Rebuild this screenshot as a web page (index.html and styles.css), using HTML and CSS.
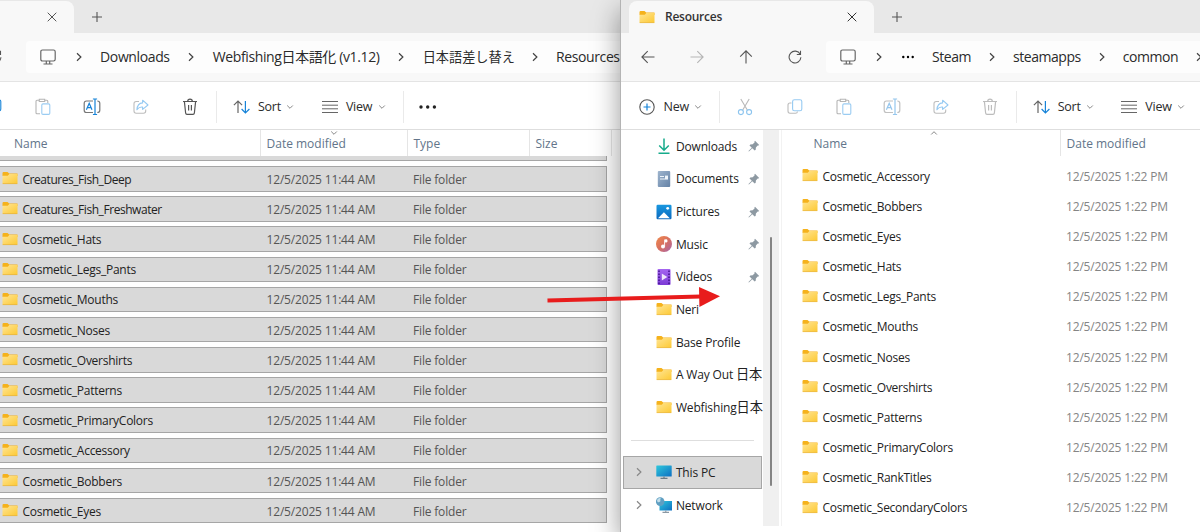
FILE: index.html
```
<!DOCTYPE html>
<html lang="en">
<head>
	<meta charset="utf-8">
	<title>Resources</title>
	<link rel="stylesheet" href="styles.css">
</head>
<body>
	<!-- shared icons -->
	<svg class="defs" width="0" height="0">
		<defs>
			<linearGradient id="gFolder" x1="0" y1="0" x2="1" y2="1"><stop offset="0" stop-color="#ffe594"/><stop offset="1" stop-color="#fdc933"/></linearGradient>
			<linearGradient id="gDoc" x1="0" y1="0" x2="1" y2="1"><stop offset="0" stop-color="#9fb5ce"/><stop offset="1" stop-color="#6482a6"/></linearGradient>
			<linearGradient id="gPic" x1="0" y1="0" x2="0" y2="1"><stop offset="0" stop-color="#1a98e0"/><stop offset="1" stop-color="#0b68bd"/></linearGradient>
			<linearGradient id="gMusic" x1="0" y1="0" x2="1" y2="1"><stop offset="0" stop-color="#f08a4c"/><stop offset=".5" stop-color="#d8705f"/><stop offset="1" stop-color="#a565b0"/></linearGradient>
			<linearGradient id="gVid" x1="0" y1="0" x2="0" y2="1"><stop offset="0" stop-color="#a566f0"/><stop offset="1" stop-color="#7c3bd6"/></linearGradient>
			<linearGradient id="gPc" x1="0" y1="0" x2="1" y2="1"><stop offset="0" stop-color="#2fc8dc"/><stop offset="1" stop-color="#0d6fc2"/></linearGradient>
		</defs>
		<symbol id="folder" viewBox="0 0 16 14"><path d="M.5 2.2Q.5 1 1.600 1H5.500L7.200 2.500H15.500V5H.5z" fill="#f5b21c"/><path d="M.5 4.800H5.800L7.300 3H15.500V12.300Q15.500 12.800 15 12.800H1Q.5 12.800.5 12.300z" fill="url(#gFolder)"/><path d="M.7 12.600H15.300" stroke="#e9b02d" stroke-width=".7"/></symbol>
		<symbol id="chev" viewBox="0 0 8 12"><path d="M2 2.200L5.900 6 2 9.800" fill="none" stroke="currentColor" stroke-width="1.200"/></symbol>
		<symbol id="down" viewBox="0 0 8 6"><path d="M1.200 1.500L4 4.300 6.800 1.500" fill="none" stroke="currentColor"/></symbol>
		<symbol id="close" viewBox="0 0 10 10"><path d="M.7.700L9.300 9.300M9.300.700L.7 9.300" stroke="currentColor"/></symbol>
		<symbol id="plus" viewBox="0 0 10 10"><path d="M5 0V10M0 5H10" stroke="currentColor" stroke-width="1.100"/></symbol>
		<symbol id="monitor" viewBox="0 0 16 16"><path d="M2.500 1H13.500Q15.200 1 15.200 2.700V10.300Q15.200 12 13.500 12H2.500Q.8 12 .8 10.300V2.700Q.8 1 2.500 1zM6.300 12V14.800M9.700 12V14.800M3.500 15H12.500" fill="none" stroke="#666" stroke-width="1.200"/></symbol>
		<symbol id="refresh" viewBox="0 0 14 14"><path d="M12.200 4.200A5.900 5.900 0 1 0 12.900 7.300M12.500.800V4.500H8.800" fill="none" stroke="#555" stroke-width="1.100"/></symbol>
		<symbol id="cut" viewBox="0 0 16 18"><g fill="none" stroke-width="1.100"><path d="M3.800 1L10.300 12M12.200 1L5.700 12" stroke="#b9b9b9"/><circle cx="3.900" cy="14.100" r="2.500" stroke="#8cc4ee"/><circle cx="12.100" cy="14.100" r="2.500" stroke="#8cc4ee"/></g></symbol>
		<symbol id="copy" viewBox="0 0 16 18"><g fill="none" stroke-width="1.100"><path d="M4.500 5H3Q1 5 1 7V13Q1 15.200 3 15.200H8.500Q10.300 15.200 10.500 13.500" stroke="#bcbcbc"/><rect x="5.600" y="1.800" width="9.200" height="11" rx="1.800" stroke="currentColor"/></g></symbol>
		<symbol id="paste" viewBox="0 0 16 18"><g fill="none" stroke-width="1.100"><path d="M5 15.800H2Q1 15.800 1 14.800V3.300Q1 2.300 2 2.300H4M10 2.300H11.800Q12.800 2.300 12.800 3.300V5M4.300 1.300H9.700V3.500H4.300z" stroke="#b5b5b5"/><rect x="6.800" y="5.900" width="8" height="10.500" rx="1.200" stroke="#9accf2"/></g></symbol>
		<symbol id="rename" viewBox="0 0 18 18"><g fill="none" stroke="currentColor" stroke-width="1.200"><path class="frame" d="M10 3H3.500Q1.200 3 1.200 5.300V12.200Q1.200 14.500 3.500 14.500H10M14.300 3Q16.800 3 16.800 5.300V12.200Q16.800 14.500 14.300 14.500"/><path d="M3.400 11.800L6.200 5.200 9 11.800M4.300 9.700H8.100"/><path d="M12 1.200V16.300M9.900 1H14.100M9.900 16.500H14.100"/></g></symbol>
		<symbol id="share" viewBox="0 0 16 18"><g fill="none" stroke-width="1.100"><path d="M6 3.500H3.200Q1 3.500 1 5.700V13Q1 15.200 3.200 15.200H10.500Q12.700 15.200 12.700 13V11.500" stroke="#bdbdbd"/><path d="M9.600 2.200L15 7 9.600 11.400V9Q6 8.700 3.900 11.700 4.400 5.300 9.600 4.900z" stroke="#96caf2" stroke-linejoin="round"/></g></symbol>
		<symbol id="trash" viewBox="0 0 16 18"><path d="M1 3.500H15M5.700 3.300Q5.700 1.200 8 1.200T10.300 3.300M2.400 3.600L3.600 14.800Q3.800 16.300 5 16.300H11Q12.200 16.300 12.400 14.800L13.600 3.600M6.600 7V12.500M9.400 7V12.500" fill="none" stroke="currentColor" stroke-width="1.200"/></symbol>
		<symbol id="sort" viewBox="0 0 18 16"><g fill="none" stroke-width="1.200"><path d="M5 14V2M.9 6.100L5 2 9.100 6.100" stroke="#666"/><path d="M12.400 2V14M8.600 10L12.400 14 16.400 10" stroke="#1683d8"/></g></symbol>
		<symbol id="view" viewBox="0 0 16 12"><path d="M0 .5H16M0 4.200H16M0 7.800H16M0 11.500H16" stroke="#666" stroke-width="1"/></symbol>
		<symbol id="pin" viewBox="0 0 12 12"><path d="M7 .8L11.200 4.900 10.400 5.600 9.700 5.400 7.900 7.400 7.700 9.700 6.700 10.600 4.300 8.200 1.200 11.300.500 11.500.700 10.800 3.800 7.700 1.500 5.400 2.300 4.400 4.700 4.200 6.700 2.300 6.400 1.500z" fill="#8d99a2"/></symbol>
	</svg>

	<!-- source window -->
	<div class="window source">
		<div class="tabs">
			<div class="tab"><svg class="x"><use href="#close"/></svg></div>
			<svg class="add"><use href="#plus"/></svg>
		</div>
		<div class="nav">
			<svg class="icon14 cut-off"><use href="#refresh"/></svg>
			<div class="address">
				<svg class="pc"><use href="#monitor"/></svg>
				<svg class="sep"><use href="#chev"/></svg>
				<span class="crumb">Downloads</span>
				<svg class="sep"><use href="#chev"/></svg>
				<span class="crumb">Webfishing日本語化 (v1.12)</span>
				<svg class="sep"><use href="#chev"/></svg>
				<span class="crumb jp">日本語差し替え</span>
				<svg class="sep"><use href="#chev"/></svg>
				<span class="crumb">Resources</span>
			</div>
		</div>
		<div class="toolbar">
			<div class="tool"><svg class="strong"><use href="#copy"/></svg></div>
			<div class="tool"><svg><use href="#paste"/></svg></div>
			<div class="tool"><svg class="w18 accent"><use href="#rename"/></svg></div>
			<div class="tool"><svg><use href="#share"/></svg></div>
			<div class="tool dark"><svg><use href="#trash"/></svg></div>
			<div class="line"></div>
			<div class="menu sort"><svg class="sorticon"><use href="#sort"/></svg><span>Sort</span><svg class="dd"><use href="#down"/></svg></div>
			<div class="menu view"><svg class="viewicon"><use href="#view"/></svg><span>View</span><svg class="dd"><use href="#down"/></svg></div>
			<div class="line"></div>
			<svg class="more" viewBox="0 0 18 4"><circle cx="2" cy="2" r="1.700"/><circle cx="8.700" cy="2" r="1.700"/><circle cx="15.400" cy="2" r="1.700"/></svg>
		</div>
		<div class="head">
			<div>Name</div>
			<div>Date modified<svg class="mark"><use href="#down"/></svg></div>
			<div>Type</div>
			<div>Size</div>
		</div>
		<div class="rows">
			<div class="stub"></div>
			<div class="row"><svg><use href="#folder"/></svg><span class="tight">Creatures_Fish_Deep</span><span>12/5/2025 11:44 AM</span><span>File folder</span></div>
			<div class="row"><svg><use href="#folder"/></svg><span class="tight">Creatures_Fish_Freshwater</span><span>12/5/2025 11:44 AM</span><span>File folder</span></div>
			<div class="row"><svg><use href="#folder"/></svg><span>Cosmetic_Hats</span><span>12/5/2025 11:44 AM</span><span>File folder</span></div>
			<div class="row"><svg><use href="#folder"/></svg><span>Cosmetic_Legs_Pants</span><span>12/5/2025 11:44 AM</span><span>File folder</span></div>
			<div class="row"><svg><use href="#folder"/></svg><span>Cosmetic_Mouths</span><span>12/5/2025 11:44 AM</span><span>File folder</span></div>
			<div class="row"><svg><use href="#folder"/></svg><span>Cosmetic_Noses</span><span>12/5/2025 11:44 AM</span><span>File folder</span></div>
			<div class="row"><svg><use href="#folder"/></svg><span>Cosmetic_Overshirts</span><span>12/5/2025 11:44 AM</span><span>File folder</span></div>
			<div class="row"><svg><use href="#folder"/></svg><span>Cosmetic_Patterns</span><span>12/5/2025 11:44 AM</span><span>File folder</span></div>
			<div class="row"><svg><use href="#folder"/></svg><span>Cosmetic_PrimaryColors</span><span>12/5/2025 11:44 AM</span><span>File folder</span></div>
			<div class="row"><svg><use href="#folder"/></svg><span>Cosmetic_Accessory</span><span>12/5/2025 11:44 AM</span><span>File folder</span></div>
			<div class="row"><svg><use href="#folder"/></svg><span>Cosmetic_Bobbers</span><span>12/5/2025 11:44 AM</span><span>File folder</span></div>
			<div class="row"><svg><use href="#folder"/></svg><span>Cosmetic_Eyes</span><span>12/5/2025 11:44 AM</span><span>File folder</span></div>
		</div>
	</div>

	<!-- target window -->
	<div class="window target">
		<div class="tabs">
			<div class="tab"><svg class="tabfolder"><use href="#folder"/></svg><span>Resources</span><svg class="x"><use href="#close"/></svg></div>
			<svg class="add"><use href="#plus"/></svg>
		</div>
		<div class="nav">
			<svg class="icon14" viewBox="0 0 14 14"><path d="M13.500 7H1M6.700 1.200L.9 7 6.700 12.800" fill="none" stroke="#555" stroke-width="1.100"/></svg>
			<svg class="icon14" viewBox="0 0 14 14"><path d="M.5 7H13M7.300 1.200L13.100 7 7.300 12.800" fill="none" stroke="#b5b5b5" stroke-width="1.100"/></svg>
			<svg class="icon14" viewBox="0 0 14 14"><path d="M7 13.500V1M1.200 6.700L7 .9 12.800 6.700" fill="none" stroke="#555" stroke-width="1.100"/></svg>
			<svg class="icon14"><use href="#refresh"/></svg>
			<div class="address">
				<svg class="pc"><use href="#monitor"/></svg>
				<svg class="sep"><use href="#chev"/></svg>
				<svg class="dots" viewBox="0 0 12 4"><circle cx="1.300" cy="2" r="1.200"/><circle cx="6" cy="2" r="1.200"/><circle cx="10.700" cy="2" r="1.200"/></svg>
				<span class="crumb">Steam</span>
				<svg class="sep"><use href="#chev"/></svg>
				<span class="crumb">steamapps</span>
				<svg class="sep"><use href="#chev"/></svg>
				<span class="crumb">common</span>
				<svg class="sep"><use href="#chev"/></svg>
			</div>
		</div>
		<div class="toolbar faded">
			<div class="menu new"><svg viewBox="0 0 16 16"><circle cx="8" cy="8" r="7.200" fill="none" stroke="#555" stroke-width="1.100"/><path d="M8 4.500V11.500M4.500 8H11.500" stroke="#1683d8" stroke-width="1.200"/></svg><span>New</span><svg class="dd"><use href="#down"/></svg></div>
			<div class="line"></div>
			<div class="tool"><svg><use href="#cut"/></svg></div>
			<div class="tool"><svg class="soft"><use href="#copy"/></svg></div>
			<div class="tool"><svg><use href="#paste"/></svg></div>
			<div class="tool"><svg class="w18 accent"><use href="#rename"/></svg></div>
			<div class="tool"><svg><use href="#share"/></svg></div>
			<div class="tool"><svg><use href="#trash"/></svg></div>
			<div class="line"></div>
			<div class="menu sort"><svg class="sorticon"><use href="#sort"/></svg><span>Sort</span><svg class="dd"><use href="#down"/></svg></div>
			<div class="menu view"><svg class="viewicon"><use href="#view"/></svg><span>View</span><svg class="dd"><use href="#down"/></svg></div>
		</div>
		<div class="body">
			<div class="side">
				<div class="item"><svg viewBox="0 0 16 16"><path d="M8 .5V12M3.200 7.500L8 12.200 12.800 7.500M2.500 15.200H13.500" fill="none" stroke="#16ab8b" stroke-width="1.500"/></svg><span>Downloads</span><svg class="pin"><use href="#pin"/></svg></div>
				<div class="item"><svg viewBox="0 0 16 16"><rect x="1.800" width="12.400" height="16" rx="1" fill="url(#gDoc)"/><path d="M4 5.500H8M4 8H12" stroke="#eef4fa" stroke-width="1.100"/><rect x="9" y="4.600" width="3" height="3.500" fill="#eef4fa"/></svg><span>Documents</span><svg class="pin"><use href="#pin"/></svg></div>
				<div class="item"><svg viewBox="0 0 16 16"><rect x=".5" y=".7" width="15" height="14.600" rx="1.200" fill="url(#gPic)"/><path d="M2 14.200L7.900 8.200 13.800 14.200z" fill="#fff"/><circle cx="11.700" cy="4.300" r="1.400" fill="#fff"/></svg><span>Pictures</span><svg class="pin"><use href="#pin"/></svg></div>
				<div class="item"><svg viewBox="0 0 16 16"><circle cx="8" cy="8" r="8" fill="url(#gMusic)"/><path d="M8.600 10.500V3.800H11V6H9.200" fill="#fff" stroke="#fff" stroke-width=".8"/><circle cx="7" cy="10.600" r="2" fill="#fff"/></svg><span>Music</span><svg class="pin"><use href="#pin"/></svg></div>
				<div class="item"><svg viewBox="0 0 16 16"><rect x="1.500" width="13" height="16" rx="1" fill="url(#gVid)"/><path d="M3 1.500V15M13 1.500V15" stroke="#43138c" stroke-width="1.500" stroke-dasharray="1.600 1.400"/><path d="M5.800 4.500V11.500L11.300 8z" fill="#f0e6fb"/></svg><span>Videos</span><svg class="pin"><use href="#pin"/></svg></div>
				<div class="item"><svg class="f"><use href="#folder"/></svg><span>Neri</span></div>
				<div class="item"><svg class="f"><use href="#folder"/></svg><span>Base Profile</span></div>
				<div class="item"><svg class="f"><use href="#folder"/></svg><span>A Way Out <b>日本</b></span></div>
				<div class="item"><svg class="f"><use href="#folder"/></svg><span>Webfishing<b>日本</b></span></div>
				<div class="rule"></div>
				<div class="item tree selected"><svg class="sep"><use href="#chev"/></svg><svg viewBox="0 0 16 16"><rect x=".3" y="1.500" width="15.400" height="11" rx=".6" fill="url(#gPc)"/><path d="M8 12.500V14M4.500 14.300H11.500" stroke="#6c7a85" stroke-width="1.200"/></svg><span>This PC</span></div>
				<div class="item tree"><svg class="sep"><use href="#chev"/></svg><svg viewBox="0 0 16 16"><path d="M3.500 4H16V13.500H3.500z" fill="url(#gPc)"/><path d="M9.800 13.500V15M6.500 15.400H13" stroke="#8a98a3" stroke-width="1.100"/><circle cx="4.200" cy="4.600" r="4.300" fill="#5f9fc2"/><path d="M1 3Q3 0 5 1.500 3.500 2.500 4.500 4 3 6 1.500 5z" fill="#c4dfeb"/></svg><span>Network</span></div>
			</div>
			<div class="scroll"><div class="thumb"></div></div>
			<div class="files">
				<div class="head">
					<div>Name<svg class="mark up"><use href="#down"/></svg></div>
					<div>Date modified</div>
				</div>
				<div class="file"><svg><use href="#folder"/></svg><span>Cosmetic_Accessory</span><span>12/5/2025 1:22 PM</span></div>
				<div class="file"><svg><use href="#folder"/></svg><span>Cosmetic_Bobbers</span><span>12/5/2025 1:22 PM</span></div>
				<div class="file"><svg><use href="#folder"/></svg><span>Cosmetic_Eyes</span><span>12/5/2025 1:22 PM</span></div>
				<div class="file"><svg><use href="#folder"/></svg><span>Cosmetic_Hats</span><span>12/5/2025 1:22 PM</span></div>
				<div class="file"><svg><use href="#folder"/></svg><span>Cosmetic_Legs_Pants</span><span>12/5/2025 1:22 PM</span></div>
				<div class="file"><svg><use href="#folder"/></svg><span>Cosmetic_Mouths</span><span>12/5/2025 1:22 PM</span></div>
				<div class="file"><svg><use href="#folder"/></svg><span>Cosmetic_Noses</span><span>12/5/2025 1:22 PM</span></div>
				<div class="file"><svg><use href="#folder"/></svg><span>Cosmetic_Overshirts</span><span>12/5/2025 1:22 PM</span></div>
				<div class="file"><svg><use href="#folder"/></svg><span>Cosmetic_Patterns</span><span>12/5/2025 1:22 PM</span></div>
				<div class="file"><svg><use href="#folder"/></svg><span>Cosmetic_PrimaryColors</span><span>12/5/2025 1:22 PM</span></div>
				<div class="file"><svg><use href="#folder"/></svg><span>Cosmetic_RankTitles</span><span>12/5/2025 1:22 PM</span></div>
				<div class="file"><svg><use href="#folder"/></svg><span>Cosmetic_SecondaryColors</span><span>12/5/2025 1:22 PM</span></div>
			</div>
		</div>
	</div>

	<svg class="arrow" viewBox="0 0 174 22"><path d="M.5 14.500L154 10.500" stroke="#e81c1c" stroke-width="4"/><path d="M152 1L173 10.300 152.400 21z" fill="#e81c1c"/></svg>
</body>
</html>
```
FILE: styles.css
```
* {
	box-sizing: border-box;
}
body {
	margin: 0;
	width: 1200px;
	height: 532px;
	overflow: hidden;
	position: relative;
	background: #fff;
	font-family: "Open Sans", "Noto Sans CJK JP", sans-serif;
	font-size: 12px;
	letter-spacing: -0.17px;
	color: #2b2b2b;
}
.defs {
	position: absolute;
}
svg {
	display: block;
	flex: none;
}
span {
	white-space: nowrap;
}

/* windows */
.window {
	position: absolute;
	top: 0;
	height: 532px;
	overflow: hidden;
	background: #fff;
}
.source {
	left: 0;
	width: 640px;
}
.target {
	left: 620px;
	width: 580px;
	border-left: 1px solid #b4b4b4;
	box-shadow: 0 10px 26px rgba(0, 0, 0, 0.4);
}

/* tabs */
.tabs {
	height: 33px;
	background: #e8e8e8;
	display: flex;
	align-items: center;
	color: #555;
}
.tab {
	height: 32px;
	margin-top: 1px;
	background: #f8f8f8;
	border-radius: 8px 8px 0 0;
	display: flex;
	align-items: center;
}
.source .tab {
	width: 74px;
	border-top-left-radius: 0;
	padding-left: 47px;
}
.target .tab {
	width: 245px;
	margin-left: 8px;
	padding: 0 0 1px 9.500px;
	font-weight: 600;
	letter-spacing: -0.25px;
	color: #333;
}
.tab span {
	width: 182px;
	margin-left: 10.500px;
}
.x {
	width: 10px;
	height: 10px;
}
.add {
	width: 10px;
	height: 10px;
	margin: 1px 0 0 18.400px;
}
.tabfolder {
	width: 16px;
	height: 14px;
}

/* address bar */
.nav {
	height: 49px;
	background: #f8f8f8;
	border-bottom: 1px solid #e4e4e4;
	display: flex;
	align-items: center;
}
.target .nav {
	padding-left: 20px;
}
.icon14 {
	width: 14px;
	height: 14px;
	margin-right: 35px;
}
.cut-off {
	margin: 0 24px 0 -12px;
}
.target .address {
	margin-left: -11px;
}
.address {
	flex: 1;
	height: 32px;
	padding: 0 0 1px 14px;
	background: #fdfdfd;
	border-radius: 4px 0 0 4px;
	display: flex;
	align-items: center;
	font-size: 14px;
	letter-spacing: -0.38px;
	overflow: hidden;
}
.crumb {
	line-height: 20px;
}
.pc {
	width: 16px;
	height: 16px;
	margin-right: 1px;
}
.sep {
	width: 8px;
	height: 12px;
	margin: 0 17.400px 0 17.700px;
	color: #444;
}
.target .crumb {
	letter-spacing: -0.45px;
}
.target .crumb + .sep {
	margin: 0 16.700px 0 17.200px;
}
.dots {
	width: 12px;
	height: 4px;
	margin: 0 18.500px 0 1.500px;
}
.crumb.jp {
	font-size: 13.2px;
	letter-spacing: 0;
}
.crumb.jp + .sep {
	margin: 0 16.500px 0 16.500px;
}

/* toolbar */
.toolbar {
	height: 48px;
	padding-top: 2px;
	border-bottom: 1px solid #dedede;
	display: flex;
	align-items: center;
}
.source .tool:first-child {
	margin-left: -30.6px;
}
.tool {
	width: 49px;
	display: flex;
	justify-content: center;
	color: #bdbdbd;
}
.tool svg {
	width: 16px;
	height: 18px;
}
.tool svg.w18 {
	width: 18px;
}
.tool .accent {
	color: #1683d8;
}
.frame {
	stroke: #777;
}
.faded .tool:nth-child(3) {
	margin-left: -0.8px;
}
.faded .tool:nth-child(4) {
	margin-left: 0.8px;
}
.faded .line ~ .line {
	margin-left: 2px;
}
.faded .accent {
	opacity: 0.45;
}
.dark {
	color: #555;
}
.soft {
	color: #96caf2;
}
.strong {
	color: #1683d8;
}
.line {
	width: 1px;
	height: 32px;
	margin: 0 2px;
	background: #eaeaea;
}
.menu {
	display: flex;
	align-items: center;
	font-size: 12.5px;
	letter-spacing: -0.25px;
}
.new {
	width: 96px;
	padding-left: 18px;
}
.new > svg:first-child {
	width: 16px;
	height: 16px;
}
.new span {
	width: 30px;
	margin-left: 8.500px;
}
.sort {
	width: 89px;
	padding-left: 13.500px;
}
.sort span {
	width: 28px;
	margin-left: 7px;
}
.view {
	width: 92.500px;
	padding-left: 13.500px;
}
.view span {
	width: 32px;
	margin-left: 8px;
}
.sorticon {
	width: 18px;
	height: 16px;
}
.viewicon {
	width: 16px;
	height: 12px;
}
.dd {
	width: 8px;
	height: 6px;
	color: #888;
}
.more {
	width: 18px;
	height: 4px;
	margin-left: 13.500px;
	fill: #222;
}

/* list header */
.head {
	height: 26px;
	display: grid;
	grid-template-columns: 261px 147px 122px 82px;
	color: #62758a;
	letter-spacing: 0;
}
.head div {
	position: relative;
	padding-left: 5.500px;
	line-height: 28px;
	height: 26px;
	border-right: 1px solid #e5e5e5;
}
.source .head div:first-child {
	padding-left: 14px;
}
.mark {
	position: absolute;
	top: 0;
	left: 68px;
	width: 10px;
	height: 6px;
	color: #888;
}
.up {
	left: 147px;
	transform: scaleY(-1);
}

/* selected rows */
.stub {
	width: 607.400px;
	height: 5px;
	margin-bottom: 5px;
	background: #d9d9d9;
	border: 1px solid #a6a6a6;
	border-width: 0 1px 1px 0;
}
.row {
	width: 607.400px;
	height: 25.600px;
	padding-top: 1px;
	margin-bottom: 4.580px;
	background: #d9d9d9;
	border: 1px solid #a6a6a6;
	border-left: 0;
	display: grid;
	grid-template-columns: 22.500px 244px 146.500px 1fr;
	align-items: center;
	color: #555;
}
.row svg,
.file svg {
	width: 16px;
	height: 14px;
	margin-left: 2.400px;
	margin-top: -2px;
}
.row svg + span,
.file svg + span {
	color: #222;
	letter-spacing: -0.26px;
}
.row svg + span.tight {
	letter-spacing: -0.45px;
}

/* side pane */
.body {
	display: flex;
}
.side {
	width: 142px;
	overflow: hidden;
	letter-spacing: -0.15px;
	color: #222;
}
.item {
	height: 32.650px;
	padding-left: 34.500px;
	display: flex;
	align-items: center;
}
.item svg {
	width: 16px;
	height: 16px;
}
.item svg.f {
	height: 14px;
	margin-top: -1px;
}
.item span {
	margin-left: 4.400px;
	line-height: 17px;
}
.item b {
	font-size: 13.2px;
	font-weight: normal;
	line-height: 17px;
}
.item svg.pin {
	width: 12px;
	height: 12px;
	margin-left: auto;
	margin-right: 3px;
}
.rule {
	height: 1px;
	width: 123px;
	margin: 16px 0 15px 10px;
	background: #dedede;
}
.tree {
	height: 33px;
	margin-left: 2px;
	width: 140px;
	padding-left: 0;
}
.tree svg.sep {
	width: 8px;
	height: 12px;
	margin: 0 13px 0 11.500px;
	color: #888;
}
.selected {
	width: 139px;
	background: #d9d9d9;
	border: 1px solid #a6a6a6;
}
.selected svg.sep {
	margin-left: 10.500px;
}
.scroll {
	width: 16px;
	height: 396px;
	background: #f0f0f0;
	padding: 107px 0 0 6.500px;
}
.thumb {
	width: 2.500px;
	height: 249px;
	border-radius: 2px;
	background: #858585;
}

/* target files */
.files {
	flex: 1;
	margin-left: 2px;
	border-left: 1px solid #f2f2f2;
}
.files .head {
	grid-template-columns: 279px 1fr;
	margin-bottom: 5px;
}
.files .head div:first-child {
	padding-left: 31.500px;
}
.files .head div:last-child {
	border-right: 0;
}
.file {
	height: 30.180px;
	display: grid;
	grid-template-columns: 40.500px 243.500px 1fr;
	align-items: center;
	color: #858585;
}
.file svg {
	margin-left: 20.400px;
}

/* drag arrow */
.arrow {
	position: absolute;
	left: 547px;
	top: 286px;
	width: 174px;
	height: 22px;
}
```
